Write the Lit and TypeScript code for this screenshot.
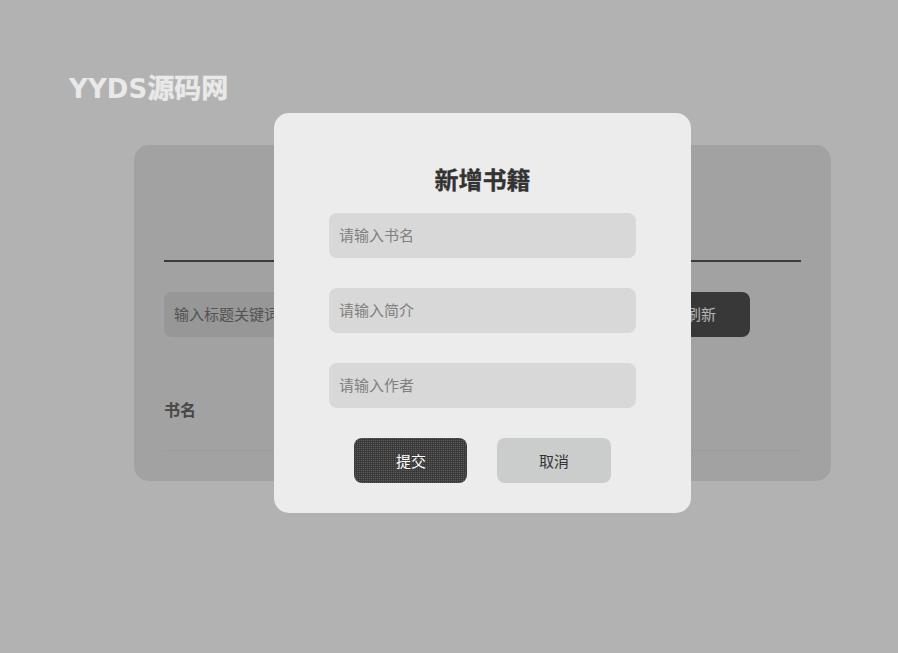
import { LitElement, html, css } from "lit";
import { customElement } from "lit/decorators.js";

@customElement("app-root")
export class AppRoot extends LitElement {
  static styles = css`
    :host {
      display: block;
      position: relative;
      width: 898px;
      height: 653px;
      overflow: hidden;
      background: #fff;
      font-family: "Noto Sans CJK SC", "Liberation Sans", sans-serif;
      font-size: 15px;
      color: #333;
    }
    .header {
      position: relative;
      z-index: 2;
      display: flex;
      height: 145px;
      padding: 68px 0 0 69px;
      box-sizing: border-box;
    }
    .logo {
      display: flex;
      align-items: baseline;
      height: 38px;
      color: #e9e9e9;
      font-size: 27px;
      line-height: 38px;
      font-weight: 700;
    }
    .latin {
      font-family: "DejaVu Sans", sans-serif;
      font-size: 26px;
      font-weight: 700;
      letter-spacing: 0.1px;
    }
    .cjk {
      -webkit-text-stroke: 0.5px #e9e9e9;
    }
    .card {
      box-sizing: border-box;
      width: 697px;
      height: 336px;
      margin-left: 134px;
      padding: 115px 30px 0;
      border-radius: 15px;
      background: #e9e9e9;
    }
    .rule {
      height: 2px;
      background: #555;
    }
    .tools {
      display: flex;
      justify-content: space-between;
      margin-top: 30px;
      width: 586px;
    }
    .search {
      box-sizing: border-box;
      width: 300px;
      height: 45px;
      padding-left: 10px;
      border-radius: 8px;
      background: #d8d8d8;
      color: #777;
      line-height: 43px;
    }
    .refresh {
      width: 98px;
      height: 45px;
      border-radius: 8px;
      background: #515151;
      color: #fff;
      text-align: center;
      line-height: 43px;
    }
    .th {
      display: flex;
      align-items: center;
      height: 75px;
      padding-bottom: 4px;
      margin-top: 34px;
      border-bottom: 1px dotted #d6d6d6;
      font-size: 16px;
      font-weight: 700;
      color: #666;
    }
    .overlay {
      position: absolute;
      inset: 0;
      z-index: 1;
      background: rgba(0, 0, 0, 0.3);
    }
    .modal {
      position: absolute;
      left: 274px;
      top: 113px;
      box-sizing: border-box;
      width: 417px;
      height: 400px;
      padding: 47px 55px 0;
      border-radius: 15px;
      background: #ececec;
      display: flex;
      flex-direction: column;
    }
    h2 {
      margin: 0 0 15px;
      height: 38px;
      line-height: 38px;
      text-align: center;
      font-size: 24px;
      font-weight: 700;
      color: #333;
      -webkit-text-stroke: 0.3px #333;
    }
    .fields {
      display: flex;
      flex-direction: column;
      gap: 30px;
    }
    .field {
      box-sizing: border-box;
      height: 45px;
      padding-left: 10px;
      border-radius: 8px;
      background: #d8d8d8;
      color: #808080;
      line-height: 43px;
    }
    .actions {
      display: flex;
      justify-content: center;
      gap: 30px;
      margin-top: 30px;
    }
    .btn {
      box-sizing: border-box;
      height: 45px;
      line-height: 45px;
      border-radius: 8px;
      text-align: center;
    }
    .submit {
      width: 113px;
      padding-left: 1px;
      color: #fff;
      background-color: #3a3a3a;
      background-image: conic-gradient(#5e5c5c 25%, transparent 25%);
      background-size: 2px 2px;
    }
    .cancel {
      width: 114px;
      color: #333;
      background: #cbcdcc;
    }
  `;

  render() {
    return html`
      <div class="header">
        <div class="logo"><span class="latin">YYDS</span><span class="cjk">源码网</span></div>
      </div>
      <div class="card">
        <div class="rule"></div>
        <div class="tools">
          <div class="search">输入标题关键词</div>
          <div class="refresh">刷新</div>
        </div>
        <div class="th">书名</div>
      </div>
      <div class="overlay">
        <div class="modal">
          <h2>新增书籍</h2>
          <div class="fields">
            <div class="field">请输入书名</div>
            <div class="field">请输入简介</div>
            <div class="field">请输入作者</div>
          </div>
          <div class="actions">
            <div class="btn submit">提交</div>
            <div class="btn cancel">取消</div>
          </div>
        </div>
      </div>
    `;
  }
}
